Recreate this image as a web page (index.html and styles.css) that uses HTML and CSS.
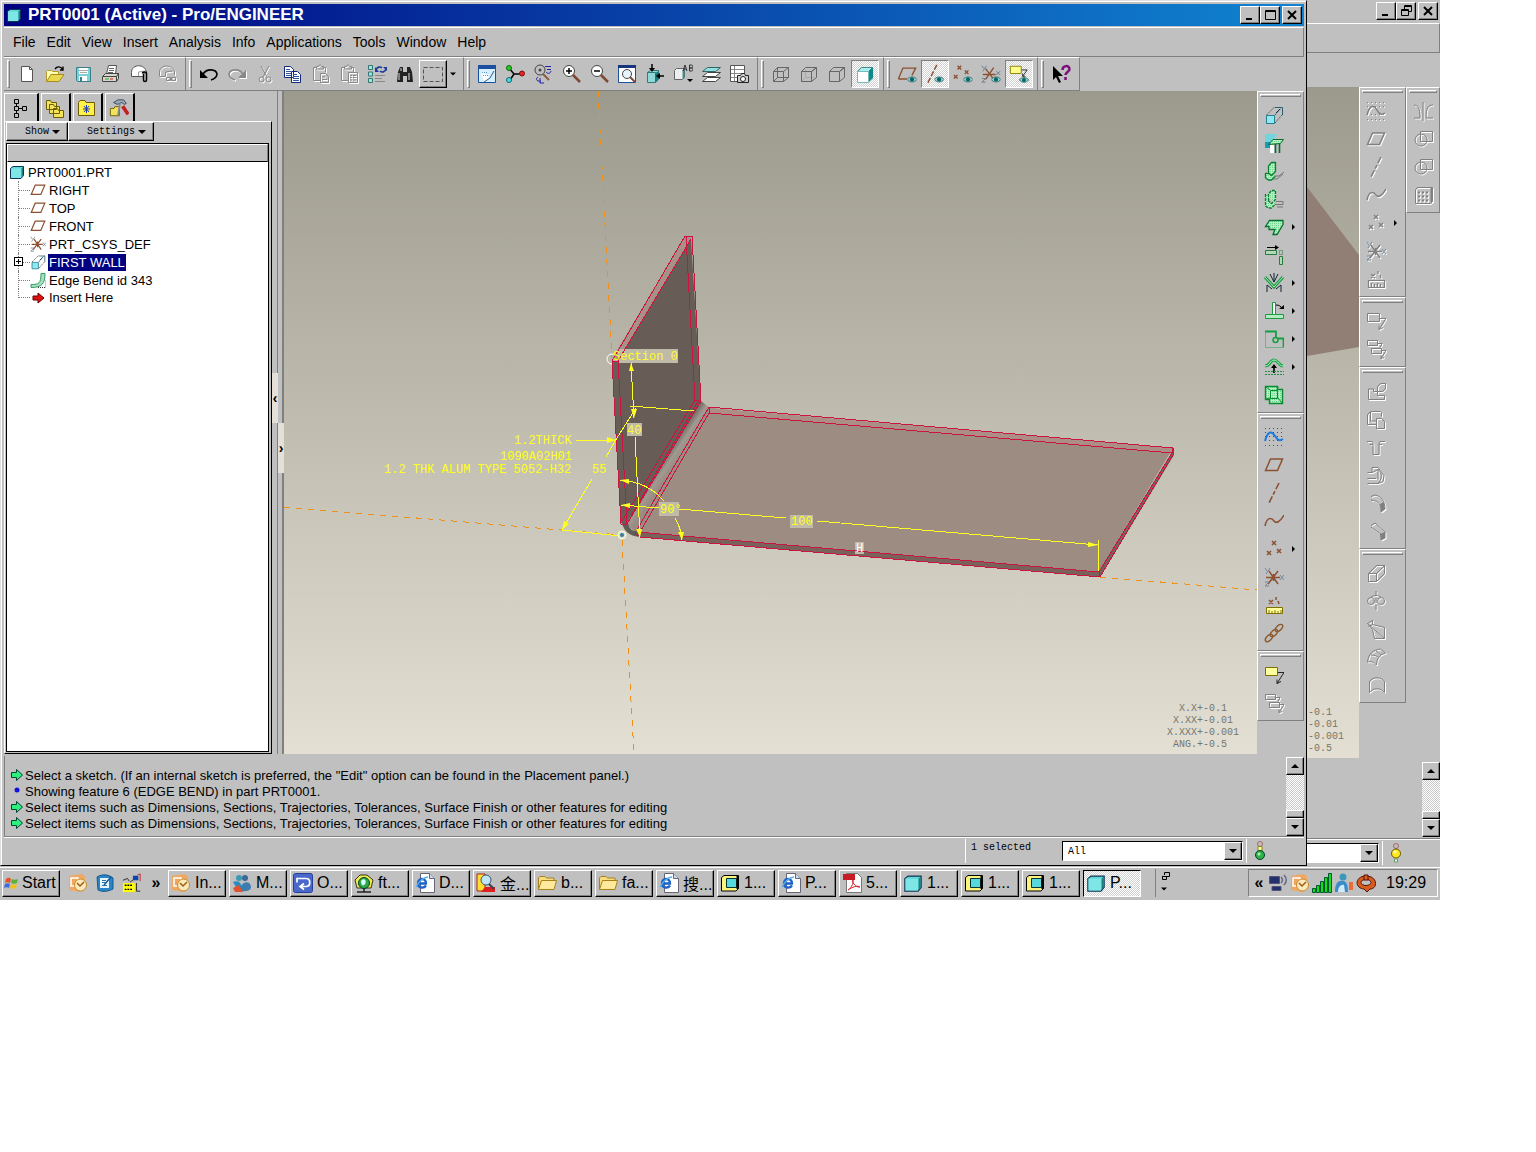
FILE: index.html
```html
<!DOCTYPE html>
<html lang="en">
<head>
  <meta charset="UTF-8">
  <title>PRT0001 (Active) - Pro/ENGINEER</title>
  <link rel="stylesheet" href="styles.css">
</head>
<body>

<!-- icon sprite -->
<svg class="sprite" aria-hidden="true">
  <defs>
    <pattern id="dots" width="2" height="2" patternUnits="userSpaceOnUse"><rect width="2" height="2" fill="#b4f0c4"/><rect width="1" height="1" fill="#6cd48c"/></pattern>
    <linearGradient id="sky" x1="0" y1="0" x2="0" y2="1"><stop offset="0" stop-color="#9c9a8c"/><stop offset="1" stop-color="#e3e0d3"/></linearGradient>
    <linearGradient id="bend" gradientUnits="userSpaceOnUse" x1="661" y1="461" x2="673" y2="469"><stop offset="0" stop-color="#6d635d"/><stop offset=".5" stop-color="#a09a92"/><stop offset="1" stop-color="#988a80"/></linearGradient>
  </defs>

  <symbol id="part" viewBox="0 0 16 16"><path d="M1.500 4.500 4 2.500h10.500v9L12 14.500H1.500z" fill="#5cd6d6" stroke="#135"/><path d="M2 4.500h10v9.500H2z" fill="#7fe6e6"/><path d="M12.500 4.500 14 3v8.500L12.500 13z" fill="#1c8080"/></symbol>
  <symbol id="min" viewBox="0 0 16 14"><path d="M4 11h6" stroke="#000" stroke-width="2"/></symbol>
  <symbol id="max" viewBox="0 0 16 14"><path d="M3.500 2.500h10v9h-10zM3 3.500h11" fill="none" stroke="#000"/></symbol>
  <symbol id="restore" viewBox="0 0 16 14"><path d="M6.500 5V1.500h7v6H11M6 2.500h8M3.500 5.500h7v6h-7zM3 6.500h8" fill="none" stroke="#000"/></symbol>
  <symbol id="close" viewBox="0 0 16 14"><path d="m4 3 8 8m0-8-8 8" stroke="#000" stroke-width="2"/></symbol>
  <symbol id="down" viewBox="0 0 8 8"><path d="M0 2h8L4 6z"/></symbol>
  <symbol id="up" viewBox="0 0 8 8"><path d="M0 6h8L4 2z"/></symbol>
  <symbol id="right" viewBox="0 0 8 8"><path d="M2 1v6l3-3z"/></symbol>

  <symbol id="new" viewBox="0 0 20 20"><path d="M4.500 2.500h8l3 3v12h-11z" fill="#fff" stroke="#555"/><path d="M12.500 2.500v3h3" fill="none" stroke="#555"/></symbol>
  <symbol id="open" viewBox="0 0 20 20"><path d="M1.500 17V7.500l1-1h4l1 1h6v3" fill="#ffffb0" stroke="#b8982c"/><path d="M1.500 17.500 6 10.500h13L14 17.500z" fill="#ead84c" stroke="#a88c20"/><path d="M10 5c2-3 6-3 8 1M15 6h3V2.500" fill="none" stroke="#000" stroke-width="1.400"/></symbol>
  <symbol id="save" viewBox="0 0 20 20"><path d="M3.500 3.500h14v14h-13l-1-1z" fill="#79d3d6" stroke="#3b7f88"/><path d="M6 4h9v6H6zM6 12h8v5H6z" fill="#fff"/><path d="M6 6.500h9M7 8.500h7" stroke="#aaa"/><path d="M7 13h2v4H7z" fill="#3b7f88"/></symbol>
  <symbol id="print" viewBox="0 0 20 20"><path d="m5.500 10 2-8.500h8l-1 9z" fill="#fff" stroke="#555"/><path d="M8 4.500h5M8 6.500h5M7 8.500h5" stroke="#666"/><path d="m1.500 12.500 3-3h13v5l-2 3h-14z" fill="#d8d4cc" stroke="#444"/><path d="M2 12.500h13.500v5M15.500 12.500l2-3" fill="none" stroke="#444"/><path d="M4 15h4" stroke="#2a2"/><path d="M9 15h3" stroke="#c22"/></symbol>
  <symbol id="mail" viewBox="0 0 20 20"><path d="M2.500 8.500c0-9 14-9 15 0l-3 1v3h-12z" fill="#fff" stroke="#555"/><path d="M9.500 12V8l7-1" fill="none" stroke="#999"/><path d="M14.500 10v6c0 2 3 2 3 0V9.500c0-2-4-2-4 0" fill="none" stroke="#000" stroke-width="1.500"/></symbol>
  <symbol id="maillink" viewBox="0 0 20 20"><path d="M2.500 12V8c0-8 14-8 15 0v3M2.500 12.500h6M8.500 12V8l7-1M9.500 13.500h4v3h-4zM14.500 13.500h4v3h-4zM12 15h4" fill="none" stroke="#888"/></symbol>
  <symbol id="undo" viewBox="0 0 20 20"><path d="M4 10c4-6 13-5 14 0 0 3-3 5-6 6" fill="none" stroke="#000" stroke-width="1.600"/><path d="M1 6v8h8z"/></symbol>
  <symbol id="redo" viewBox="0 0 20 20"><path d="M16 10C12 4 3 5 2 10c0 3 3 5 6 6" fill="none" stroke="#888" stroke-width="1.600"/><path d="M19 6v8h-8z" fill="#888"/></symbol>
  <symbol id="cut" viewBox="0 0 20 20"><path d="m6 2 6 11M14 2 8 13" stroke="#888" fill="none"/><circle cx="6.500" cy="15.500" r="2.500" fill="none" stroke="#888"/><circle cx="13.500" cy="15.500" r="2.500" fill="none" stroke="#888"/></symbol>
  <symbol id="copy" viewBox="0 0 20 20"><path d="M1.500 2.500h6l3 3v8h-9zM8.500 7.500h6l3 3v8h-9z" fill="#fff" stroke="#112a7a"/><path d="M3 5.500h4M3 7.500h5M3 9.500h5M3 11.500h5M10 10.500h4M10 12.500h6M10 14.500h6M10 16.500h6" stroke="#3355a0"/></symbol>
  <symbol id="paste" viewBox="0 0 20 20"><path d="M9 16.500H2.500v-13h3m6 0h3V8M5.500 5V2.500h2c0-2 3-2 3 0h2V5zM9.500 9.500h5l3 3v6h-8zM11 13h3M11 15.500h5" fill="none" stroke="#888"/></symbol>
  <symbol id="pastespecial" viewBox="0 0 20 20"><path d="M9 16.500H2.500v-13h3m6 0h3V8M5.500 5V2.500h2c0-2 3-2 3 0h2V5zM9.500 8.500h9v10h-9zM11 11.500h2M14 11.500h3M11 13.500h2M14 13.500h3M11 16h2M14 16h3" fill="none" stroke="#888"/></symbol>
  <symbol id="regen" viewBox="0 0 20 20"><path d="M1.500 1.500h4v4h-4zM1.500 8h4v4h-4zM1.500 14.500h4v4h-4z" fill="#9ee6d4" stroke="#377"/><path d="M9 6c1-3 4-4 6-2M19 5c-1 3-4 4-6 2" fill="none" stroke="#1a3a9a" stroke-width="1.600"/><path d="M8 3v5h4zM20 7V3h-4z" fill="#1a3a9a"/><path d="M8 11.500h10M8 14.500h7M8 17.500h10" stroke="#888"/></symbol>
  <symbol id="find" viewBox="0 0 20 20"><path d="M3 8 5 3h3v15H2zM17 8l-2-5h-3v15h6zM8 8h4v4H8z" fill="#222"/><path d="M4 9v7M14 9v7M6 4v3" stroke="#ddd"/></symbol>
  <symbol id="box" viewBox="0 0 20 20"><path d="M.5 3.500h19v14H.5z" fill="none" stroke="#555" stroke-dasharray="4 2"/></symbol>

  <symbol id="repaint" viewBox="0 0 20 20"><path d="M1.500 1.500h17v17h-17z" fill="#d7eefc" stroke="#1c4fa0"/><path d="M1 1h18v4H1z" fill="#1c4fa0"/><path d="m4 7 9 7-6 4z" fill="#fff"/><path d="m17 7-4 7-6 4" fill="none" stroke="#2b5f95"/><path d="M5 8.500h5M6 11.500h5" stroke="#5a9ad0" stroke-dasharray="1 1"/></symbol>
  <symbol id="spin" viewBox="0 0 20 20"><path d="m4 4 5 6-4 6M9 10h7" fill="none" stroke="#000" stroke-width="1.500"/><circle cx="4" cy="4" r="2.500" fill="#2c2" stroke="#161"/><circle cx="4" cy="16" r="2.500" fill="#4de" stroke="#166"/><circle cx="17" cy="9.500" r="2.500" fill="#e22" stroke="#711"/></symbol>
  <symbol id="orient" viewBox="0 0 20 20"><circle cx="7" cy="6" r="5" fill="none" stroke="#444"/><circle cx="7" cy="6" r="1.500" fill="#444"/><path d="m10 10 6 6" stroke="#8a5a3c" stroke-width="2"/><path d="M12 2.500h6M14 5.500h4M13 8c2 2 4 2 5-1M5 13c-3 2-1 5 3 4M7 14v5h4" fill="none" stroke="#22a"/></symbol>
  <symbol id="zoomin" viewBox="0 0 20 20"><path d="m11 10 8 8" stroke="#7c4a30" stroke-width="2.500"/><circle cx="8" cy="7" r="5.500" fill="#fff" stroke="#444"/><path d="M5 7h6M8 4v6" stroke="#000" stroke-width="1.500"/></symbol>
  <symbol id="zoomout" viewBox="0 0 20 20"><path d="m11 10 8 8" stroke="#7c4a30" stroke-width="2.500"/><circle cx="8" cy="7" r="5.500" fill="#fff" stroke="#444"/><path d="M5 7h6" stroke="#000" stroke-width="1.500"/></symbol>
  <symbol id="refit" viewBox="0 0 20 20"><path d="M1.500 1.500h17v17h-17z" fill="#fff" stroke="#1c4fa0"/><path d="M1 1h18v3H1z" fill="#16357e"/><path d="m12 12 6 6" stroke="#7c4a30" stroke-width="2"/><circle cx="10" cy="10" r="4.500" fill="#e8f4fc" stroke="#444"/></symbol>
  <symbol id="reorient" viewBox="0 0 20 20"><path d="m2.500 8.500 3-2h8v9l-3 3h-8z" fill="#8ed8d8" stroke="#377"/><path d="M2.500 8.500h8v10" fill="none" stroke="#377"/><path d="M10.500 9v9l3-3V7z" fill="#197878"/><path d="M7 0v6M19 12h-5" stroke="#000" stroke-width="1.500"/><path d="M4 4h6L7 8zM15 9v6l-4-3z"/></symbol>
  <symbol id="views" viewBox="0 0 20 20"><path d="m1.500 6.500 2-2h8v9l-2 2h-8z" fill="#eee" stroke="#666"/><path d="M9.500 6.500v9l2-2v-9z" fill="#3c9090"/><path d="m10 7 2-6 2 6M11 5h2M16.500 1v6h2c2 0 2-3 0-3h-2 2c1.500 0 1.500-3 0-3z" fill="none" stroke="#333"/><path d="M14 15h6l-3 3z"/></symbol>
  <symbol id="layers" viewBox="0 0 20 20"><path d="m1.500 17.500 5-4h13l-5 4zM1.500 12.500l5-4h13l-5 4z" fill="#fff" stroke="#444"/><path d="m1.500 7.500 5-4h13l-5 4z" fill="#8fe0e0" stroke="#366"/></symbol>
  <symbol id="viewmgr" viewBox="0 0 20 20"><path d="M1.500 1.500h14v16h-14z" fill="#fff" stroke="#555"/><path d="M2 5.500h13M2 9.500h13M2 13.500h13M5.500 2v15" stroke="#888"/><path d="M8.500 11.500h3l1-2h3l1 2h3v7h-11z" fill="#ccc" stroke="#222"/><circle cx="14" cy="15" r="2.500" fill="#fff" stroke="#222"/></symbol>

  <symbol id="wire" viewBox="0 0 20 20"><path d="M2.500 7.500h10v10h-10zM6.500 3.500h11v10h-11zM2.500 7.500l4-4M12.500 7.500l5-4M12.500 17.500l5-4M2.500 17.500l4-4" fill="none" stroke="#666"/></symbol>
  <symbol id="hidden" viewBox="0 0 20 20"><path d="M6.500 5v8.500H16M6 14l-3 3" fill="none" stroke="#aaa"/><path d="M2.500 7.500h10v10h-10zl4-4h11l-5 4 5-4v10l-5 4" fill="none" stroke="#666"/></symbol>
  <symbol id="nohidden" viewBox="0 0 20 20"><path d="M2.500 7.500h10v10h-10zl4-4h11l-5 4 5-4v10l-5 4" fill="none" stroke="#666"/></symbol>
  <symbol id="shaded" viewBox="0 0 20 20"><path d="m2.500 7.500 4-4h11l-4 4z" fill="#a8f0f0" stroke="#488"/><path d="M2.500 7.500h11v11h-11z" fill="#fff" stroke="#7bb"/><path d="m14 7 4-4v11l-4 4z" fill="#188"/></symbol>

  <symbol id="eye" viewBox="0 0 12 8"><path d="M0 4c3-4 9-4 12 0-3 4-9 4-12 0z" fill="#9cc" stroke="#366"/><circle cx="6" cy="4" r="2.500" fill="#066"/></symbol>
  <symbol id="plane" viewBox="0 0 20 20"><path d="M1.500 15.500 6.500 4h12l-5 11.500z" fill="none" stroke="currentColor" stroke-width="1.500"/></symbol>
  <symbol id="axis" viewBox="0 0 20 20"><path d="M15 0 5 20" fill="none" stroke="currentColor" stroke-width="1.600" stroke-dasharray="7 2 4 2"/></symbol>
  <symbol id="curve" viewBox="0 0 20 20"><path d="M1 15c2-10 7-8 9-5s6 1 10-6" fill="none" stroke="currentColor" stroke-width="1.500"/></symbol>
  <symbol id="points" viewBox="0 0 20 20"><path d="m8 2 4 4m0-4L8 6M3 12l4 4m0-4-4 4M13 10l4 4m0-4-4 4" fill="none" stroke="currentColor" stroke-width="1.500"/></symbol>
  <symbol id="csys" viewBox="0 0 20 20"><path d="M2 10.500h14M5 4l9 13M14 4 4 17M9.500 7v7" fill="none" stroke="currentColor" stroke-width="1.500"/><path d="m1 1 2 3m3-3L2 7M1 15h4l-4 4h4M16 8l4 5m0-5-4 5" fill="none" stroke="#789"/></symbol>
  <symbol id="planeeye" viewBox="0 0 22 20"><path d="M1.500 15.500 6.500 3.500h14l-4 8M1.500 15.500H11" fill="none" stroke="#8c5030" stroke-width="1.500"/><use href="#eye" x="11" y="12" width="11" height="8"/></symbol>
  <symbol id="axiseye" viewBox="0 0 22 20"><path d="M13 0 3 20" stroke="#8c5030" stroke-width="1.600" stroke-dasharray="6 2"/><use href="#eye" x="10" y="12" width="11" height="8"/></symbol>
  <symbol id="pointseye" viewBox="0 0 22 20"><path d="m5 1 4 4m0-4L5 5M1 11l4 4m0-4-4 4M13 6l4 4m0-4-4 4" stroke="#8c5030" stroke-width="1.500"/><use href="#eye" x="11" y="12" width="11" height="8"/></symbol>
  <symbol id="csyseye" viewBox="0 0 22 20"><path d="M2 10.500h14M5 4l9 12M14 3 5 16" stroke="#8c5030" stroke-width="1.500"/><path d="m1 1 2 3m3-3L2 7M1 15h4l-4 4h4M17 7l4 4m0-4-4 4" fill="none" stroke="#678"/><use href="#eye" x="11" y="12" width="11" height="8"/></symbol>
  <symbol id="noteeye" viewBox="0 0 22 20"><path d="M1.500 1.500h12v8h-12z" fill="#ffff8c" stroke="#887a00"/><path d="M14 5.500h6l-5 7v-3m0 3h3" fill="none" stroke="#222"/><use href="#eye" x="11" y="13" width="11" height="7"/></symbol>
  <symbol id="help" viewBox="0 0 20 20"><path d="M2 2v14l3-3 3 6 2-1-3-6h5z"/><path d="M11.500 6c0-5 7-5 7-1 0 3-4 3-4 6M14.500 13v3" fill="none" stroke="#7a107a" stroke-width="2.500"/></symbol>

  <symbol id="tree" viewBox="0 0 16 20"><path d="M1.500 1.500h4v4h-4zM1.500 8.500h4v4h-4zM1.500 15.500h4v4h-4zM9.500 8.500h4v4h-4zM3.500 5.500v3M3.500 12.500v3M5.500 10.500h4" fill="none" stroke="#000"/></symbol>
  <symbol id="folders" viewBox="0 0 20 20"><path d="M1.500 2.500h4l1 2h5v7h-10zM4.500 6.500h4l1 2h5v7h-10zM8.500 10.500h4l1 2h5v7h-10z" fill="#f2e25c" stroke="#6d5c00"/></symbol>
  <symbol id="fav" viewBox="0 0 20 20"><path d="M1.500 4.500 3 2.500h5l1 2h8.500v13h-16z" fill="#fff04c" stroke="#6d5c00"/><path d="M9.500 7v8M6 11h7M7 8l5 6m0-6-5 6" stroke="#1c3cb0"/></symbol>
  <symbol id="conn" viewBox="0 0 22 20"><path d="M1.500 10.500h4l1-2h5v10h-10z" fill="#f2e25c" stroke="#6d5c00"/><path d="m5 4 5-3h6l3 4-2 1-3-2-5 2z" fill="#9ab" stroke="#345"/><path d="m12 5-2 13" stroke="#888" stroke-width="2"/><path d="m15 8 6 9" stroke="#c22020" stroke-width="4"/></symbol>

  <symbol id="wall" viewBox="0 0 20 20"><path d="M2.500 10.500h8v8h-8z" fill="#8eeaf0" stroke="#2a7c90"/><path d="m2.500 10 8-8M11 10l7-8M11 18l7-8" fill="none" stroke="#555" stroke-dasharray="2 1"/><path d="M11 2.500h7.500V10" fill="none" stroke="#2a6070"/><path d="m12 8 4-4" fill="none" stroke="#135"/></symbol>
  <symbol id="conv" viewBox="0 0 20 20"><path d="M1 1h12L8 9H1z" fill="#6fd6dc"/><path d="M1 9h6v6H1z" fill="#1a9ab0"/><path d="M4.500 11.500 9 6.500h10.500l-3 4z" fill="url(#dots)" stroke="#0a6a30"/><path d="M6 12h4v8H6z" fill="#fff"/><path d="M11.500 11v9M15.500 11v9" stroke="#0a6a30" stroke-width="1.600"/></symbol>
  <symbol id="flange" viewBox="0 0 20 20"><path d="M4.500 12V5l3-3.500h4v9l-4 4zM1.500 12v5l3 2h3l4-4M1.500 12l3 1" fill="url(#dots)" stroke="#0a8030" stroke-width="1.300"/><path d="M11 15h4l5-4M9 18h4l6-5" fill="none" stroke="#777"/></symbol>
  <symbol id="flange2" viewBox="0 0 20 20"><path d="M4.500 12V5l3-3.500h4v9l-4 4zM1.500 5v12l3 2h3l4-4" fill="url(#dots)" stroke="#0a8030" stroke-width="1.300" stroke-dasharray="3 1"/><path d="M11 15.500h8v-3h-7M13 18h6" fill="none" stroke="#777"/></symbol>
  <symbol id="flat" viewBox="0 0 20 20"><path d="m1.500 9.500 4-6h13.500v4l-6 10h-4l2-5h-6v-3z" fill="url(#dots)" stroke="#0a7030" stroke-width="1.300"/></symbol>
  <symbol id="extend" viewBox="0 0 20 20"><path d="M3 2.500h10" stroke="#000"/><path d="M11 0v5l4-2.500z"/><path d="M1.500 5.500h11v4h-11z" fill="#b4d8bc" stroke="#287a3c"/><path d="M15.500 5.500h3v4h-3z" fill="none" stroke="#287a3c" stroke-dasharray="1 1"/><path d="M15.500 11.500h3v8h-3z" fill="#b4d8bc" stroke="#287a3c"/></symbol>
  <symbol id="unbend" viewBox="0 0 20 20"><path d="m1 4 9 10 9-10" fill="none" stroke="#1b9a40" stroke-width="3"/><path d="m1 4 9 10 9-10" fill="none" stroke="#a6eab8"/><path d="M10 0v9M6 1l4 8 4-8M3 19v-7l5 4M17 19v-7l-5 4" fill="none" stroke="#123"/></symbol>
  <symbol id="bendback" viewBox="0 0 20 20"><path d="M1.500 13.500h18v4h-18z" fill="#b0ecc0" stroke="#1b9a40"/><path d="M8.500 1.500h3v12h-3z" fill="#fff" stroke="#1b9a40"/><path d="M12 4c3 0 5 1 6 4" fill="none" stroke="#000"/><path d="M15 8h5v-4z"/></symbol>
  <symbol id="rip" viewBox="0 0 20 20"><path d="M1.500 2.500v16h18" fill="none" stroke="#2fa050" stroke-dasharray="1 1"/><path d="M1 2.500h11v6M14 9.500h5.500v9" fill="none" stroke="#13a040" stroke-width="1.800"/><circle cx="11.500" cy="11" r="2.500" fill="none" stroke="#13a040" stroke-width="1.500"/></symbol>
  <symbol id="form" viewBox="0 0 20 20"><path d="M1 9c5 0 5-6 9-6s5 6 9 6" fill="none" stroke="#13a040" stroke-width="3"/><path d="M1 9c5 0 5-6 9-6s5 6 9 6" fill="none" stroke="#c4f4d0"/><path d="M10 16V8" stroke="#000" stroke-width="1.600"/><path d="M7 11h6l-3-4z"/><path d="M1 14.500h19M1 17.500h19" stroke="#2a8a4c" stroke-dasharray="2 1"/></symbol>
  <symbol id="flatpat" viewBox="0 0 20 20"><path d="M1.500 1.500h12v3h5v14h-13v-4h-4z" fill="url(#dots)" stroke="#0a8a30" stroke-width="1.400"/><path d="M6.500 5.500h7v8h-7zM2 2l4 3M13 5l1-3M6 13l-4 1M14 13l4 5" fill="none" stroke="#0a8a30"/></symbol>
  <symbol id="sketch" viewBox="0 0 20 20"><path d="M1 1.500h19M1 5.500h19M1 9.500h19M1 13.500h19M1 18.500h19" stroke="#357" stroke-dasharray="1 3"/><path d="M1 14C4 3 8 4 11 9s5 5 8 3" fill="none" stroke="#1b7ae0" stroke-width="2"/></symbol>
  <symbol id="gsketch" viewBox="0 0 20 20"><path d="M1 1.500h19M1 5.500h19M1 13.500h19M1 18.500h19" stroke="#808080" stroke-dasharray="1 3"/><path d="M1 14C4 3 8 4 11 9s5 5 8 3" fill="none" stroke="#808080" stroke-width="1.500"/></symbol>
  <symbol id="measure" viewBox="0 0 20 20"><path d="m5 5 4 4m0-4-4 4M12 2v3M14 6l1 3" stroke="currentColor" stroke-width="1.500"/><path d="M2.500 12.500h16v6h-16z" fill="#ffff9c" stroke="#807000"/><path d="M5 19v-4M8 19v-3M11 19v-4M14 19v-3M17 19v-4" stroke="#807000"/></symbol>
  <symbol id="gmeasure" viewBox="0 0 20 20"><path d="m5 5 4 4m0-4-4 4M12 2v3M14 6l1 3M2.500 11.500h16v7h-16zM5.500 18v-4M8.500 18v-3M11.500 18v-4M14.500 18v-3" fill="none" stroke="#808080" stroke-width="1.200"/></symbol>
  <symbol id="chain" viewBox="0 0 20 20"><g fill="none" stroke="#8c5a2c" stroke-width="1.400"><ellipse cx="5" cy="15" rx="2.500" ry="4.500" transform="rotate(45 5 15)"/><ellipse cx="10" cy="10" rx="2.500" ry="4.500" transform="rotate(45 10 10)"/><ellipse cx="15" cy="5" rx="2.500" ry="4.500" transform="rotate(45 15 5)"/></g></symbol>
  <symbol id="note" viewBox="0 0 20 20"><path d="M1.500 2.500h12v8h-12z" fill="#ffff9c" stroke="#807000"/><path d="M14 7.500h6l-7 11v-4m0 4 4-2" fill="none" stroke="#222"/></symbol>
  <symbol id="gnote" viewBox="0 0 20 20"><path d="M1.500 2.500h12v8h-12zM14 7.500h6l-7 11v-4m0 4 4-2" fill="none" stroke="#808080"/></symbol>
  <symbol id="gnotes" viewBox="0 0 20 20"><path d="M1.500 1.500h10v5h-10zM12 4.500h4l-2 4M5.500 9.500h10v5h-10zM16 11.500h4l-5 8v-3m0 3 3-1" fill="none" stroke="#808080"/></symbol>

  <symbol id="g1" viewBox="0 0 20 20"><path d="M2.500 8v10.500h16v-4h-7v-4h-4V8zM11.500 5.500l3-3h5v5l-3 3h-5z" fill="none" stroke="#808080"/></symbol>
  <symbol id="g2" viewBox="0 0 20 20"><path d="M1.500 5.500l3-3h10l1 1v4M1.500 5.500v10h9M4.500 3v9h6M10.500 9.500h5l3 3v7h-8z" fill="none" stroke="#808080"/></symbol>
  <symbol id="g3" viewBox="0 0 20 20"><path d="M1 4.500h4c2 0 2 1 2 3v10h6v-10c0-2 0-3 2-3h4M4 7.500h3M13 7.500h3" fill="none" stroke="#808080"/></symbol>
  <symbol id="g4" viewBox="0 0 20 20"><path d="M6 2.500h6l6 8-1 6-5 2H1.500M6 2.500v5H1.500M6 7.500l6-3v10M1.500 13.500H10M12 4.500c5 3 4 10 0 14" fill="none" stroke="#808080"/></symbol>
  <symbol id="g5" viewBox="0 0 20 20"><path d="M5 3.500 9 2c6 1 10 6 10 14l-4 3c1-7-2-11-10-12" fill="none" stroke="#808080"/><path d="M14 11l4-2 1 7-4 3z" fill="#808080"/></symbol>
  <symbol id="g6" viewBox="0 0 20 20"><path d="M5 4.500 9 2l10 9v6l-4 2v-6L5 6" fill="none" stroke="#808080"/><path d="m14 13 5-2v6l-4 2z" fill="#808080"/></symbol>
  <symbol id="g7" viewBox="0 0 20 20"><path d="M2.500 10.500h8v8h-8zl8-8h8l-8 8 8-8v8l-8 8" fill="none" stroke="#808080"/></symbol>
  <symbol id="g8" viewBox="0 0 20 20"><circle cx="5" cy="10" r="3.500" fill="none" stroke="#808080"/><circle cx="15" cy="10" r="3.500" fill="none" stroke="#808080"/><path d="M10 0v20" stroke="#808080" stroke-dasharray="5 2"/><path d="M5 6c3-2 7-2 10 0" fill="none" stroke="#808080"/></symbol>
  <symbol id="g9" viewBox="0 0 20 20"><path d="M1.500 4.500l5-3v4l12 3v11h-10l-2-9zl17 15M6.500 5.500l-4 2" fill="none" stroke="#808080"/></symbol>
  <symbol id="g10" viewBox="0 0 20 20"><path d="M1.500 15c1-8 5-12 13-13l5 4c-5 1-9 5-9 12-2-3-6-4-9-3zM5 8c4 0 6 1 8 3M10 4l5 4" fill="none" stroke="#808080"/></symbol>
  <symbol id="g11" viewBox="0 0 20 20"><path d="M3.500 17.500v-11c3-5 12-5 15 0v11c-3-5-12-5-15 0z" fill="none" stroke="#808080"/></symbol>
  <symbol id="mirror" viewBox="0 0 20 20"><path d="M10 1v19M1 4c4 0 6 3 6 13H1M20 4c-5 0-7 3-7 13h7" fill="none" stroke="#808080"/></symbol>
  <symbol id="merge" viewBox="0 0 20 20"><path d="M7.500 2.500h12v10h-12z" fill="none" stroke="#808080"/><circle cx="8" cy="11" r="6" fill="none" stroke="#808080"/></symbol>
  <symbol id="grid" viewBox="0 0 20 20"><path d="m2.500 4.500 2-2h15v14l-2 2h-15z" fill="none" stroke="#808080"/><path d="M5 7.500h11M5 11.500h11M5 15.500h11" stroke="#808080" stroke-width="2" stroke-dasharray="2 2"/><path d="M18.500 3v14" stroke="#808080" stroke-width="2"/></symbol>

  <symbol id="edge" viewBox="0 0 16 16"><path d="M1 12.500c8 0 10-1 10-11h4c0 10-3 14-14 14z" fill="#a8e0c0" stroke="#396"/><path d="M8 15.500h8v-8" fill="none" stroke="#333" stroke-dasharray="1 1"/></symbol>
  <symbol id="here" viewBox="0 0 16 16"><path d="M3 6h5V3l6 5-6 5v-3H3z" fill="#e01010" stroke="#600"/></symbol>
  <symbol id="prompt" viewBox="0 0 12 12"><path d="M.5 3.500h5v-3l6 5.500-6 5.500v-3h-5z" fill="#2cf07c" stroke="#043"/></symbol>
  <symbol id="info" viewBox="0 0 12 12"><circle cx="6" cy="5" r="2.500" fill="#11d"/></symbol>
  <symbol id="light" viewBox="0 0 12 20"><circle cx="6" cy="3" r="2.500" fill="none" stroke="#a66"/><path d="M4 5.500h4V10H4z" fill="#ff9" stroke="#882"/><circle cx="6" cy="14" r="4.500" fill="#2eb04a" stroke="#042"/><circle cx="5" cy="13" r="1.500" fill="#aef0b8"/></symbol>
  <symbol id="lighty" viewBox="0 0 12 20"><circle cx="6" cy="3" r="2.500" fill="none" stroke="#a66"/><circle cx="6" cy="10.500" r="4.500" fill="#ffe81c" stroke="#650"/><circle cx="5" cy="9" r="1.500" fill="#fffbc0"/><path d="M4.500 16h3v3h-3z" fill="#efe" stroke="#696"/></symbol>

  <symbol id="winlogo" viewBox="0 0 16 16"><path d="M2 4c2-2 4-1 5 0L6 8C4 7 3 7 1 8z" fill="#e8502c"/><path d="M8 4c2 1 4 1 6 0l-1 4c-2 1-4 1-6 0z" fill="#5cb03c"/><path d="M1 9c2-1 3-1 5 0l-1 4c-1-1-3-1-5 0z" fill="#3a6ce0"/><path d="M7 9c2 1 4 1 6 0l-1 4c-2 1-4 1-6 0z" fill="#f2c21c"/></symbol>
  <symbol id="outlook" viewBox="0 0 20 20"><path d="M1 3 14 1l3 3v12l-4 3L1 17z" fill="#f0a860"/><path d="M3 5h7v8H3z" fill="none" stroke="#fff" stroke-width="1.500"/><circle cx="12.500" cy="12" r="6" fill="#fbe9ba" stroke="#c88a30"/><path d="m9 10 3 3 4-4" fill="none" stroke="#9c5c18" stroke-width="1.500"/></symbol>
  <symbol id="desktop" viewBox="0 0 20 20"><path d="M2 4c5-3 11-3 16 1v11c-6 3-11 3-15 1z" fill="#2a84c8" stroke="#135a94"/><path d="M5 5h9v10H5z" fill="#e7f5ff"/><path d="M7 7.500h4M7 9.500h3M7 12.500h5" stroke="#2a74b0"/><path d="m9 12 7-8" stroke="#17558c" stroke-width="1.500"/></symbol>
  <symbol id="zap" viewBox="0 0 22 20"><path d="M1 10h13v10H1z" fill="#ff0"/><path d="M3 12.500h9M3 17h9" stroke="#000" stroke-width="1.500" stroke-dasharray="2 1"/><path d="m1 7 5-2 2 3M9 9l4-3M16 10v9h4" fill="none" stroke="#222"/><path d="M12 2h6v5h-6z" fill="#14a"/><path d="m17 1 3-1v8" fill="none" stroke="#c22"/></symbol>
  <symbol id="msn" viewBox="0 0 20 20"><circle cx="7" cy="5" r="3" fill="#3b9ab0"/><path d="M1 9c4-2 9-1 9 8L4 14z" fill="#2a8cc0"/><circle cx="13" cy="5" r="3" fill="#356a98"/><path d="M8 18c0-9 10-12 11-4 0 4-6 5-11 4z" fill="#3c7cb0"/><path d="m1 15 6-3 4 7H3z" fill="#e0522c"/></symbol>
  <symbol id="oapp" viewBox="0 0 20 20"><rect x=".5" y=".5" width="19" height="19" rx="2" fill="#4a68cc" stroke="#25409c"/><path d="M4 9.500V5.500h9c5 0 5 8 0 8H8m3-3-4 3 4 3" fill="none" stroke="#fff" stroke-width="1.700"/></symbol>
  <symbol id="globe" viewBox="0 0 20 20"><path d="m1 7 5-5h7l6 5-2 8H3z" fill="#f4ec4c" stroke="#332"/><circle cx="10" cy="10" r="5.500" fill="#2aa84c" stroke="#042"/><path d="M7 8c3-4 6 0 4 3s-4 1-4-3" fill="#dff"/><path d="M10 15v4M3 19h14" stroke="#222" stroke-width="1.500"/></symbol>
  <symbol id="ie" viewBox="0 0 20 20"><path d="M5.500.500h9l5 5v14h-14z" fill="#fff" stroke="#667"/><path d="M14.500.500v5h5" fill="#cde" stroke="#667"/><path d="M3 10.500h8c0-6-8-6-8 0 0 5 6 5 8 2" fill="none" stroke="#1c62c8" stroke-width="2.300"/><path d="M1 14C4 8 9 4 13 4" fill="none" stroke="#5ab0ec" stroke-width="1.300"/></symbol>
  <symbol id="dict" viewBox="0 0 20 20"><path d="M1 1h8v17H1z" fill="#ffe030" stroke="#a22"/><path d="M9 14h10v5H5z" fill="#dd2020"/><circle cx="10" cy="7" r="5" fill="#bfe6fa" stroke="#456"/><path d="m13 11 5 5" stroke="#345" stroke-width="2"/></symbol>
  <symbol id="folder" viewBox="0 0 20 20"><path d="M1.500 16V5l1.500-1.500h5L9.500 5H17v3" fill="#f7dc80" stroke="#a8801c"/><path d="M1.500 16.500 4.500 7.500h15l-2.500 9z" fill="#ffe99c" stroke="#a8801c"/></symbol>
  <symbol id="asm" viewBox="0 0 20 20"><path d="M1.500 4.500 4 2.500h14.500v13L16 18H1.500z" fill="#fdf27c" stroke="#000"/><path d="M6.500 5.500h10v9h-10z" fill="#56d8dc" stroke="#033"/><path d="M17.500 3v13" stroke="#000" stroke-width="2"/></symbol>
  <symbol id="pdf" viewBox="0 0 20 20"><path d="M4.500.500h11l4 4v15h-15z" fill="#fff" stroke="#777"/><path d="M1 1h12v6H1z" fill="#c81c24"/><path d="M6 17c4-2 6-9 5-10-2 0 2 8 7 7-2-2-8 0-12 3z" fill="none" stroke="#d8242c"/></symbol>
  <symbol id="cascade" viewBox="0 0 10 10"><path d="M3.500 3V.500h5v4H6M1.500 4.500h4v3h-4zM1 4.500h5" fill="none" stroke="#000"/></symbol>
  <symbol id="net" viewBox="0 0 20 20"><path d="M1.500 3.500h10v7h-10zM4 13.500h9v4H4z" fill="#23306c" stroke="#557"/><path d="M13 4c2 2 2 4 0 6M16 2c3 3 3 7 0 10" fill="none" stroke="#668" stroke-width="1.500"/></symbol>
  <symbol id="signal" viewBox="0 0 20 20"><path d="M.5 15.500h3v4h-3zM4.500 12.500h3v7h-3zM8.500 8.500h3v11h-3zM12.500 4.500h3v15h-3zM16.500.500h3v19h-3z" fill="#16e016" stroke="#053"/></symbol>
  <symbol id="user" viewBox="0 0 20 20"><circle cx="9" cy="4" r="3.500" fill="#3c98b8"/><path d="M1 19c0-9 3-12 8-11 4 0 5 5 5 11z" fill="#3c8cc8"/><path d="M4 19c0-5 3-8 6-7l1 7z" fill="#cfeafa"/><path d="M15 9h4v8h-4z" fill="#e86c3c"/></symbol>
  <symbol id="orange" viewBox="0 0 20 20"><path d="M10 3c12 0 12 13 4 13l-3 3-3-3C-2 15-1 3 10 3z" fill="#d85c1c" stroke="#511"/><ellipse cx="10" cy="9.500" rx="5" ry="3" fill="#c0c0c0" stroke="#511"/><path d="M8 2h4v5H8z" fill="#d85c1c" stroke="#511"/></symbol>
</svg>

<div class="screen">
  <div class="windows">

    <main class="window front">
      <header class="titlebar">
        <svg class="title-icon"><use href="#part"/></svg>
        <h1>PRT0001 (Active) - Pro/ENGINEER</h1>
        <div class="controls">
          <button aria-label="Minimize"><svg><use href="#min"/></svg></button>
          <button aria-label="Maximize"><svg><use href="#max"/></svg></button>
          <button class="close" aria-label="Close"><svg><use href="#close"/></svg></button>
        </div>
      </header>

      <nav class="menubar">
        <button>File</button><button>Edit</button><button>View</button><button>Insert</button><button>Analysis</button><button>Info</button><button>Applications</button><button>Tools</button><button>Window</button><button>Help</button>
      </nav>

      <div class="toolbar">
        <div class="group">
          <button class="tool" aria-label="New"><svg><use href="#new"/></svg></button>
          <button class="tool" aria-label="Open"><svg><use href="#open"/></svg></button>
          <button class="tool" aria-label="Save"><svg><use href="#save"/></svg></button>
          <button class="tool" aria-label="Print"><svg><use href="#print"/></svg></button>
          <button class="tool" aria-label="Mail"><svg><use href="#mail"/></svg></button>
          <button class="tool off" aria-label="Mail link"><svg><use href="#maillink"/></svg></button>
        </div>
        <div class="group">
          <button class="tool" aria-label="Undo"><svg><use href="#undo"/></svg></button>
          <button class="tool off" aria-label="Redo"><svg><use href="#redo"/></svg></button>
          <button class="tool off" aria-label="Cut"><svg><use href="#cut"/></svg></button>
          <button class="tool" aria-label="Copy"><svg><use href="#copy"/></svg></button>
          <button class="tool off" aria-label="Paste"><svg><use href="#paste"/></svg></button>
          <button class="tool off" aria-label="Paste special"><svg><use href="#pastespecial"/></svg></button>
          <button class="tool" aria-label="Regenerate"><svg><use href="#regen"/></svg></button>
          <button class="tool" aria-label="Find"><svg><use href="#find"/></svg></button>
          <button class="tool raised" aria-label="Select box"><svg><use href="#box"/></svg></button>
          <button class="drop" aria-label="Selection options"><svg><use href="#down"/></svg></button>
        </div>
        <div class="group">
          <button class="tool" aria-label="Repaint"><svg><use href="#repaint"/></svg></button>
          <button class="tool" aria-label="Spin center"><svg><use href="#spin"/></svg></button>
          <button class="tool" aria-label="Orient mode"><svg><use href="#orient"/></svg></button>
          <button class="tool" aria-label="Zoom in"><svg><use href="#zoomin"/></svg></button>
          <button class="tool" aria-label="Zoom out"><svg><use href="#zoomout"/></svg></button>
          <button class="tool" aria-label="Refit"><svg><use href="#refit"/></svg></button>
          <button class="tool" aria-label="Reorient"><svg><use href="#reorient"/></svg></button>
          <button class="tool" aria-label="Saved views"><svg><use href="#views"/></svg></button>
          <button class="tool" aria-label="Layers"><svg><use href="#layers"/></svg></button>
          <button class="tool" aria-label="View manager"><svg><use href="#viewmgr"/></svg></button>
        </div>
        <div class="group">
          <button class="tool" aria-label="Wireframe"><svg><use href="#wire"/></svg></button>
          <button class="tool" aria-label="Hidden line"><svg><use href="#hidden"/></svg></button>
          <button class="tool" aria-label="No hidden"><svg><use href="#nohidden"/></svg></button>
          <button class="tool pressed" aria-label="Shading"><svg><use href="#shaded"/></svg></button>
        </div>
        <div class="group">
          <button class="tool" aria-label="Datum planes"><svg><use href="#planeeye"/></svg></button>
          <button class="tool pressed" aria-label="Datum axes"><svg><use href="#axiseye"/></svg></button>
          <button class="tool" aria-label="Datum points"><svg><use href="#pointseye"/></svg></button>
          <button class="tool" aria-label="Coordinate systems"><svg><use href="#csyseye"/></svg></button>
          <button class="tool pressed" aria-label="Annotations"><svg><use href="#noteeye"/></svg></button>
        </div>
        <div class="group">
          <button class="tool" aria-label="Context help"><svg><use href="#help"/></svg></button>
        </div>
      </div>

      <div class="workspace">
        <aside class="navigator">
          <div class="tabs">
            <button class="active" aria-label="Model tree"><svg><use href="#tree"/></svg></button>
            <button aria-label="Folder browser"><svg><use href="#folders"/></svg></button>
            <button aria-label="Favorites"><svg><use href="#fav"/></svg></button>
            <button aria-label="Connections"><svg><use href="#conn"/></svg></button>
          </div>
          <div class="panel">
            <div class="panel-buttons">
              <button class="show">Show <svg><use href="#down"/></svg></button>
              <button class="settings">Settings <svg><use href="#down"/></svg></button>
            </div>
            <div class="tree-box">
              <div class="tree-head"></div>
              <ul class="tree">
                <li class="root"><svg><use href="#part"/></svg><span>PRT0001.PRT</span></li>
                <li><svg class="brown"><use href="#plane"/></svg><span>RIGHT</span></li>
                <li><svg class="brown"><use href="#plane"/></svg><span>TOP</span></li>
                <li><svg class="brown"><use href="#plane"/></svg><span>FRONT</span></li>
                <li><svg class="brown"><use href="#csys"/></svg><span>PRT_CSYS_DEF</span></li>
                <li class="selected"><button class="expand" aria-label="Expand"></button><svg><use href="#wall"/></svg><span>FIRST WALL</span></li>
                <li><svg><use href="#edge"/></svg><span>Edge Bend id 343</span></li>
                <li><svg><use href="#here"/></svg><span>Insert Here</span></li>
              </ul>
            </div>
          </div>
        </aside>
        <div class="splitter">
          <button class="left" aria-label="Collapse panel">‹</button>
          <button class="right" aria-label="Expand panel">›</button>
        </div>

        <svg class="viewport" viewBox="284 91 973 663">
          <rect x="284" y="91" width="973" height="663" fill="url(#sky)"/>
          <path class="datum" d="M598 91 612 358M622 540 634 754M284 507 621 535M1100 577 1257 590"/>
          <circle cx="612" cy="359" r="5" fill="none" stroke="#fff"/>

          <!-- upright wall -->
          <path d="M612 361 618 361 691 238 701 401 627 524 621 523z" fill="#685c56"/>
          <path d="M612 359 685 236H692L618 361z" fill="#a89086"/>
          <!-- bend strip -->
          <path d="M701 401 710 408 637 534 626 524z" fill="url(#bend)"/>
          <path d="M622 523Q625 536 640 537V532Q629 532 628 523z" fill="#5f5b55"/>
          <!-- floor -->
          <path d="M709 408 1173 448 1099 572 637 532z" fill="#9d8c81"/>
          <path d="M709 408 1173 448 1172 453 709 413z" fill="#ab8f86"/>
          <path d="M637 532 1099 572V577L640 537zM1172 452 1174 448V455L1100 577 1099 571z" fill="#79615c"/>

          <rect class="tag" x="618" y="349" width="60" height="14"/>
          <rect class="tag" x="627" y="423" width="15" height="13"/>
          <rect class="tag" x="659" y="502" width="20" height="14"/>
          <rect class="tag" x="790" y="515" width="23" height="13"/>
          <rect class="tag" x="855" y="542" width="9" height="12"/>

          <path class="edge" d="M612 361 685 236H692L701 401 627 524H621L612 361H618L627 524M618 361 691 239M686 237 695 400 701 401M695 400 622 521M699 400 631 516"/>
          <path class="edge" d="M709 407 1173 448V455L1100 577 640 537 635 533zM637 532 1099 572 1172 453 709 413 640 532M709 407V413M1172 453 1173 448M1099 572V577"/>

          <path class="dim" d="M631 363 634 418M630 406 694 411M636 408 615 441 606 457M592 479 562 530 621 536M576 440H616M635 437 640 537M620 480Q648 482 664 501M675 518Q681 528 682 540M621 505 659 508M679 509 786 518M817 521 1098 545M1098 540 1099 571"/>
          <path class="head" d="M631 363l3 8h-5zM634 418l-3-9h6zM616 440l-9-3v6zM562 530l2-9 5 3zM1098 545l-10-3v5zM682 540l-4-8h6zM620 480l9-1v5zM621 505l9-2v5zM640 537l-4-8h6z"/>
          <circle cx="622" cy="535" r="4" fill="#cfe0e0" stroke="#ffffc0"/><circle cx="622" cy="535" r="2" fill="#478"/>

          <g class="cad">
            <text x="613" y="360">Section 0</text>
            <text x="627" y="434">40</text>
            <text x="660" y="513">90°</text>
            <text x="791" y="525">100</text>
            <text x="592" y="473">55</text>
            <text x="514" y="444">1.2THICK</text>
            <text x="500" y="460">1090A02H01</text>
            <text x="384" y="473">1.2 THK ALUM TYPE 5052-H32</text>
            <text class="white" x="856" y="552">H</text>
          </g>
          <g class="tolerance">
            <text x="1179" y="711">X.X+-0.1</text>
            <text x="1173" y="723">X.XX+-0.01</text>
            <text x="1167" y="735">X.XXX+-0.001</text>
            <text x="1173" y="747">ANG.+-0.5</text>
          </g>
        </svg>

        <div class="side">
          <div class="stack">
            <button class="tool" aria-label="First wall"><svg><use href="#wall"/></svg></button>
            <button class="tool" aria-label="Conversion"><svg><use href="#conv"/></svg></button>
            <button class="tool" aria-label="Flat wall"><svg><use href="#flange"/></svg></button>
            <button class="tool" aria-label="Flange wall"><svg><use href="#flange2"/></svg></button>
            <button class="tool more" aria-label="Unattached wall"><svg><use href="#flat"/></svg><svg class="arrow"><use href="#right"/></svg></button>
            <button class="tool" aria-label="Extend wall"><svg><use href="#extend"/></svg></button>
            <button class="tool more" aria-label="Bend"><svg><use href="#unbend"/></svg><svg class="arrow"><use href="#right"/></svg></button>
            <button class="tool more" aria-label="Unbend"><svg><use href="#bendback"/></svg><svg class="arrow"><use href="#right"/></svg></button>
            <button class="tool more" aria-label="Rip"><svg><use href="#rip"/></svg><svg class="arrow"><use href="#right"/></svg></button>
            <button class="tool more" aria-label="Form"><svg><use href="#form"/></svg><svg class="arrow"><use href="#right"/></svg></button>
            <button class="tool" aria-label="Flat pattern"><svg><use href="#flatpat"/></svg></button>
          </div>
          <div class="stack brown">
            <button class="tool" aria-label="Sketch"><svg><use href="#sketch"/></svg></button>
            <button class="tool" aria-label="Plane"><svg><use href="#plane"/></svg></button>
            <button class="tool" aria-label="Axis"><svg><use href="#axis"/></svg></button>
            <button class="tool" aria-label="Curve"><svg><use href="#curve"/></svg></button>
            <button class="tool more" aria-label="Point"><svg><use href="#points"/></svg><svg class="arrow"><use href="#right"/></svg></button>
            <button class="tool" aria-label="Coordinate system"><svg><use href="#csys"/></svg></button>
            <button class="tool" aria-label="Analysis feature"><svg><use href="#measure"/></svg></button>
            <button class="tool" aria-label="Reference"><svg><use href="#chain"/></svg></button>
          </div>
          <div class="stack">
            <button class="tool" aria-label="Annotation"><svg><use href="#note"/></svg></button>
            <button class="tool off" aria-label="Propagate annotations"><svg><use href="#gnotes"/></svg></button>
          </div>
        </div>
      </div>

      <section class="messages">
        <ul>
          <li><svg><use href="#prompt"/></svg>Select a sketch. (If an internal sketch is preferred, the "Edit" option can be found in the Placement panel.)</li>
          <li><svg><use href="#info"/></svg>Showing feature 6 (EDGE BEND) in part PRT0001.</li>
          <li><svg><use href="#prompt"/></svg>Select items such as Dimensions, Sections, Trajectories, Tolerances, Surface Finish or other features for editing</li>
          <li><svg><use href="#prompt"/></svg>Select items such as Dimensions, Sections, Trajectories, Tolerances, Surface Finish or other features for editing</li>
        </ul>
        <div class="scrollbar">
          <button aria-label="Scroll up"><svg><use href="#up"/></svg></button>
          <div class="thumb"></div>
          <button aria-label="Scroll down"><svg><use href="#down"/></svg></button>
        </div>
      </section>

      <footer class="status">
        <label class="count" for="filter">1 selected</label>
        <div class="combo">
          <select id="filter"><option>All</option></select>
          <span><svg><use href="#down"/></svg></span>
        </div>
        <div class="lamp"><svg><use href="#light"/></svg></div>
      </footer>
    </main>

    <section class="window rear">
      <header class="rear-title">
        <div class="controls">
          <button aria-label="Minimize"><svg><use href="#min"/></svg></button>
          <button aria-label="Restore"><svg><use href="#restore"/></svg></button>
          <button class="close" aria-label="Close"><svg><use href="#close"/></svg></button>
        </div>
      </header>
      <div class="rear-menu"></div>
      <div class="rear-body">
        <svg class="rear-view" viewBox="1307 87 52 671">
          <rect x="1307" y="87" width="52" height="671" fill="url(#sky)"/>
          <path d="M1307 187 1359 255V347L1307 356z" fill="#917f76"/>
          <g class="tolerance">
            <text x="1308" y="715">-0.1</text>
            <text x="1308" y="727">-0.01</text>
            <text x="1308" y="739">-0.001</text>
            <text x="1308" y="751">-0.5</text>
          </g>
        </svg>
        <div class="side">
          <div class="stack grey">
            <button class="tool off" aria-label="Sketch"><svg><use href="#gsketch"/></svg></button>
            <button class="tool off" aria-label="Plane"><svg><use href="#plane"/></svg></button>
            <button class="tool off" aria-label="Axis"><svg><use href="#axis"/></svg></button>
            <button class="tool off" aria-label="Curve"><svg><use href="#curve"/></svg></button>
            <button class="tool off more" aria-label="Point"><svg><use href="#points"/></svg><svg class="arrow"><use href="#right"/></svg></button>
            <button class="tool off" aria-label="Coordinate system"><svg><use href="#csys"/></svg></button>
            <button class="tool off" aria-label="Analysis feature"><svg><use href="#gmeasure"/></svg></button>
          </div>
          <div class="stack">
            <button class="tool off" aria-label="Annotation"><svg><use href="#gnote"/></svg></button>
            <button class="tool off" aria-label="Propagate annotations"><svg><use href="#gnotes"/></svg></button>
          </div>
          <div class="stack">
            <button class="tool off" aria-label="Hole"><svg><use href="#g1"/></svg></button>
            <button class="tool off" aria-label="Shell"><svg><use href="#g2"/></svg></button>
            <button class="tool off" aria-label="Rib"><svg><use href="#g3"/></svg></button>
            <button class="tool off" aria-label="Draft"><svg><use href="#g4"/></svg></button>
            <button class="tool off" aria-label="Round"><svg><use href="#g5"/></svg></button>
            <button class="tool off" aria-label="Chamfer"><svg><use href="#g6"/></svg></button>
          </div>
          <div class="stack">
            <button class="tool off" aria-label="Extrude"><svg><use href="#g7"/></svg></button>
            <button class="tool off" aria-label="Revolve"><svg><use href="#g8"/></svg></button>
            <button class="tool off" aria-label="Sweep"><svg><use href="#g9"/></svg></button>
            <button class="tool off" aria-label="Boundary blend"><svg><use href="#g10"/></svg></button>
            <button class="tool off" aria-label="Style"><svg><use href="#g11"/></svg></button>
          </div>
        </div>
        <div class="side narrow">
          <div class="stack">
            <button class="tool off" aria-label="Mirror"><svg><use href="#mirror"/></svg></button>
            <button class="tool off" aria-label="Merge"><svg><use href="#merge"/></svg></button>
            <button class="tool off" aria-label="Trim"><svg><use href="#merge"/></svg></button>
            <button class="tool off" aria-label="Pattern"><svg><use href="#grid"/></svg></button>
          </div>
        </div>
      </div>
      <div class="rear-messages">
        <div class="scrollbar">
          <button aria-label="Scroll up"><svg><use href="#up"/></svg></button>
          <div class="thumb"></div>
          <button aria-label="Scroll down"><svg><use href="#down"/></svg></button>
        </div>
      </div>
      <footer class="status rear-status">
        <div class="combo">
          <select aria-label="Filter"></select>
          <span><svg><use href="#down"/></svg></span>
        </div>
        <div class="lamp"><svg><use href="#lighty"/></svg></div>
      </footer>
    </section>
  </div>

  <div class="taskbar">
    <button class="start"><svg><use href="#winlogo"/></svg>Start</button>
    <div class="quick">
      <button aria-label="Outlook"><svg><use href="#outlook"/></svg></button>
      <button aria-label="Show desktop"><svg><use href="#desktop"/></svg></button>
      <button aria-label="Zap"><svg><use href="#zap"/></svg></button>
      <button class="chevron">»</button>
    </div>
    <div class="tasks">
      <button><svg><use href="#outlook"/></svg>In...</button>
      <button><svg><use href="#msn"/></svg>M...</button>
      <button><svg><use href="#oapp"/></svg>O...</button>
      <button><svg><use href="#globe"/></svg>ft...</button>
      <button><svg><use href="#ie"/></svg>D...</button>
      <button><svg><use href="#dict"/></svg>金...</button>
      <button><svg><use href="#folder"/></svg>b...</button>
      <button><svg><use href="#folder"/></svg>fa...</button>
      <button><svg><use href="#ie"/></svg>搜...</button>
      <button><svg><use href="#asm"/></svg>1...</button>
      <button><svg><use href="#ie"/></svg>P...</button>
      <button><svg><use href="#pdf"/></svg>5...</button>
      <button><svg><use href="#part"/></svg>1...</button>
      <button><svg><use href="#asm"/></svg>1...</button>
      <button><svg><use href="#asm"/></svg>1...</button>
      <button class="current"><svg><use href="#part"/></svg>P...</button>
    </div>
    <div class="lang">
      <svg><use href="#cascade"/></svg>
      <svg class="small"><use href="#down"/></svg>
    </div>
    <div class="tray">
      <button class="chevron">«</button>
      <svg><use href="#net"/></svg>
      <svg><use href="#outlook"/></svg>
      <svg><use href="#signal"/></svg>
      <svg><use href="#user"/></svg>
      <svg><use href="#orange"/></svg>
      <time>19:29</time>
    </div>
  </div>
</div>

</body>
</html>
```

FILE: styles.css
```css
*,
*::before {
  box-sizing: border-box;
}

body {
  margin: 0;
  background: #fff;
  color: #000;
  font-family: "Liberation Sans", Arial, "Noto Sans CJK SC", sans-serif;
  font-size: 13px;
}

button {
  margin: 0;
  padding: 0;
  border: 0;
  background: none;
  color: inherit;
  font: inherit;
}

ul {
  margin: 0;
  padding: 0;
  list-style: none;
}

svg {
  display: block;
  flex: none;
}

.sprite {
  position: absolute;
  width: 0;
  height: 0;
}

.screen {
  margin-right: 96px;
  background: #c0c0c0;
}

.windows {
  display: flex;
}

.window {
  background: #c0c0c0;
}

.front {
  flex: 1;
  min-width: 0;
  padding: 3px 2px 1px 3px;
  border: 1px solid #000;
  border-top-color: #dfdfdf;
  border-left-color: #dfdfdf;
  box-shadow: inset 1px 1px #fff;
}

.rear {
  display: flex;
  flex-direction: column;
  width: 133px;
}

/* title bars */
.titlebar {
  display: flex;
  align-items: center;
  height: 22px;
  padding: 0 2px;
  background: linear-gradient(to right, #000080, #1084d0);
  color: #fff;
}

.title-icon {
  width: 16px;
  height: 16px;
}

.titlebar h1 {
  flex: 1;
  margin: 0 0 0 6px;
  font-size: 17px;
  line-height: 22px;
}

.controls {
  display: flex;
}

.controls button {
  width: 20px;
  height: 18px;
  padding: 1px;
  background: #c0c0c0;
  border: 1px solid;
  border-color: #fff #000 #000 #fff;
  box-shadow: inset -1px -1px #808080;
}

.controls .close {
  margin-left: 2px;
}

.controls svg {
  width: 16px;
  height: 14px;
}

/* menu and toolbars */
.menubar {
  display: flex;
  align-items: center;
  gap: 11px;
  height: 30px;
  margin-top: 1px;
  padding: 0 9px;
  border-top: 1px solid #fff;
  border-bottom: 1px solid #808080;
  border-right: 1px solid #808080;
  font-size: 14px;
}

.toolbar {
  display: flex;
  height: 34px;
}

.group {
  display: flex;
  align-items: center;
  padding-right: 4px;
  border-top: 1px solid #fff;
  border-right: 1px solid #808080;
  border-bottom: 1px solid #808080;
}

.group::before {
  content: "";
  width: 3px;
  height: 28px;
  margin: 0 3px;
  border: 1px solid;
  border-color: #fff #808080 #808080 #fff;
}

.tool {
  display: flex;
  align-items: center;
  justify-content: center;
  width: 28px;
  height: 28px;
}

.tool svg {
  width: 20px;
  height: 20px;
}

.off svg:not(.arrow) {
  filter: drop-shadow(1px 1px 0 #fff);
}

.raised {
  border: 1px solid;
  border-color: #fff #000 #000 #fff;
  box-shadow: inset -1px -1px #808080;
}

.pressed,
.tasks .current {
  border: 1px solid;
  border-color: #808080 #fff #fff #808080;
  background: repeating-conic-gradient(#fff 0 25%, #d0d0d0 0 50%) 0 0 / 2px 2px;
}

.drop svg {
  width: 6px;
  height: 6px;
  margin: 0 3px;
}

.side {
  width: 47px;
  flex: none;
}

.stack {
  padding: 2px 2px 3px;
  border: 1px solid;
  border-color: #fff #808080 #808080 #fff;
}

.stack::before {
  content: "";
  display: block;
  height: 3px;
  margin-bottom: 4px;
  border: 1px solid;
  border-color: #fff #808080 #808080 #fff;
}

.stack .tool {
  justify-content: flex-start;
  width: 100%;
  padding-left: 4px;
}

.stack .arrow {
  width: 8px;
  height: 8px;
  margin-left: 6px;
}

.brown {
  color: #8c5030;
}

.grey {
  color: #808080;
}

.arrow {
  color: #000;
}

/* model tree */
.workspace {
  display: flex;
}

.navigator {
  display: flex;
  flex-direction: column;
  flex: none;
  width: 268px;
}

.tabs {
  display: flex;
  gap: 2px;
}

.tabs button {
  display: flex;
  align-items: center;
  justify-content: center;
  width: 30px;
  height: 28px;
  margin-top: 2px;
  padding-right: 2px;
  border: 1px solid #fff;
  border-right: 2px solid #000;
  border-bottom: 0;
}

.tabs .active {
  width: 35px;
  padding-right: 0;
}

.tabs svg {
  width: 20px;
  height: 20px;
}

.panel {
  display: flex;
  flex-direction: column;
  flex: 1;
  padding: 0 2px 1px 1px;
  border: 1px solid;
  border-color: #fff #000 #000 #fff;
}

.panel-buttons {
  display: flex;
  margin-bottom: 2px;
}

.panel-buttons button {
  display: flex;
  align-items: center;
  gap: 3px;
  height: 19px;
  border: 1px solid;
  border-color: #fff #000 #000 #fff;
  box-shadow: inset -1px -1px #808080;
  font-family: "Liberation Mono", "Courier New", monospace;
  font-size: 10px;
}

.panel-buttons .show {
  width: 62px;
  padding-left: 18px;
}

.panel-buttons .settings {
  width: 86px;
  padding-left: 18px;
}

.panel-buttons svg {
  width: 8px;
  height: 8px;
}

.tree-box {
  flex: 1;
  border: 1px solid #000;
  background: #fff;
}

.tree-head {
  height: 18px;
  border: 1px solid;
  border-color: #fff #808080 #000 #fff;
  background: #c0c0c0;
}

.tree {
  padding: 1px 0 0 11px;
}

.tree li {
  display: flex;
  align-items: center;
  height: 18px;
  border-left: 1px dotted #808080;
}

.tree li::before {
  content: "";
  width: 11px;
  border-top: 1px dotted #808080;
}

.tree .root {
  margin-left: -9px;
  border-left: 0;
}

.tree .root::before {
  width: 0;
}

.tree li:last-child {
  height: 9px;
  margin-bottom: 9px;
  align-items: flex-end;
}

.tree li:last-child svg,
.tree li:last-child span {
  margin-bottom: -8px;
}

.tree svg {
  width: 16px;
  height: 16px;
  margin-right: 2px;
}

.tree span {
  padding: 0 1px;
  line-height: 17px;
}

.tree .selected {
  position: relative;
}

.tree .selected span {
  background: #000080;
  color: #fff;
}

.expand {
  position: absolute;
  left: -5px;
  top: 4px;
  width: 9px;
  height: 9px;
  border: 1px solid #000;
  background:
    linear-gradient(#000, #000) center / 5px 1px no-repeat,
    linear-gradient(#000, #000) center / 1px 5px no-repeat,
    #fff;
}

.splitter {
  display: flex;
  justify-content: space-between;
  align-items: center;
  flex: none;
  width: 12px;
  background: linear-gradient(to right, #c0c0c0 5px, #808080 5px 6px, #c0c0c0 6px 10px, #808080 10px 12px);
}

.splitter button {
  width: 6px;
  height: 50px;
  background: #e4e0d8;
  font-size: 14px;
  font-weight: bold;
  line-height: 50px;
}

.splitter .left {
  margin-bottom: 50px;
}

.splitter .right {
  margin-top: 50px;
}

/* graphics area */
.viewport {
  flex: 1;
  min-width: 0;
  height: auto;
}

.datum {
  fill: none;
  stroke: #f09018;
  stroke-dasharray: 6 6;
  shape-rendering: crispEdges;
}

.edge {
  fill: none;
  stroke: #cc1440;
  shape-rendering: crispEdges;
}

.tag {
  fill: #c0baa8;
}

.dim {
  fill: none;
  stroke: #ffff20;
  shape-rendering: crispEdges;
}

.head {
  fill: #ffff20;
}

.cad text {
  fill: #ffff20;
  font-family: "Liberation Mono", "Courier New", monospace;
  font-size: 12px;
}

.cad .white {
  fill: #fff;
}

.tolerance text {
  fill: #77756c;
  font-family: "Liberation Mono", "Courier New", monospace;
  font-size: 10px;
}

/* message log */
.messages {
  display: flex;
  margin-top: 2px;
  border-left: 1px solid #808080;
  border-bottom: 1px solid #808080;
}

.messages ul {
  flex: 1;
  padding: 11px 0 5px 6px;
}

.messages li {
  display: flex;
  align-items: center;
  height: 16px;
  white-space: nowrap;
}

.messages li svg {
  width: 12px;
  height: 12px;
  margin-right: 2px;
}

.scrollbar {
  display: flex;
  flex-direction: column;
  width: 18px;
  margin-top: 1px;
  background: repeating-conic-gradient(#fff 0 25%, #c8c8c8 0 50%) 0 0 / 2px 2px;
}

.scrollbar button,
.thumb {
  display: flex;
  align-items: center;
  justify-content: center;
  height: 18px;
  background: #c0c0c0;
  border: 1px solid;
  border-color: #fff #000 #000 #fff;
  box-shadow: inset -1px -1px #808080;
}

.scrollbar .thumb {
  height: 8px;
  margin-top: auto;
}

.scrollbar svg,
.combo svg {
  width: 8px;
  height: 8px;
}

/* status bar */
.status {
  display: flex;
  align-items: center;
  justify-content: flex-end;
  height: 27px;
  border-top: 1px solid #fff;
  font-family: "Liberation Mono", "Courier New", monospace;
  font-size: 10px;
}

.count {
  width: 97px;
  height: 24px;
  padding-left: 5px;
  border-left: 1px solid #fff;
  line-height: 18px;
}

.combo {
  display: flex;
  width: 181px;
  height: 20px;
  border: 1px solid;
  border-color: #000 #fff #fff #000;
  background: #fff;
}

.combo select {
  flex: 1;
  min-width: 0;
  padding: 0 0 0 5px;
  border: 0;
  appearance: none;
  background: #fff;
  color: #000;
  font: inherit;
}

.combo span {
  display: flex;
  align-items: center;
  justify-content: center;
  width: 18px;
  background: #c0c0c0;
  border: 1px solid;
  border-color: #fff #000 #000 #fff;
  box-shadow: inset -1px -1px #808080;
}

.lamp {
  width: 58px;
  height: 24px;
  margin-left: 3px;
  padding: 2px 7px;
  border-left: 1px solid #fff;
}

.lamp svg {
  width: 12px;
  height: 20px;
}

/* second window, behind */
.rear-title {
  display: flex;
  justify-content: flex-end;
  height: 23px;
  padding: 2px 2px 0 0;
}

.rear-menu {
  height: 30px;
  border-top: 1px solid #fff;
  border-right: 1px solid #808080;
  border-bottom: 1px solid #808080;
}

.rear-body {
  display: flex;
  align-items: flex-start;
  margin-top: 34px;
}

.rear-view {
  width: 52px;
}

.rear .side {
  width: 47px;
}

.rear .narrow {
  width: 34px;
}

.rear-messages {
  display: flex;
  flex: 1;
  justify-content: flex-end;
  padding: 3px 0 1px;
  border-bottom: 1px solid #808080;
}

.rear-status .combo {
  flex: 1;
  border-left: 0;
}

/* taskbar */
.taskbar {
  display: flex;
  align-items: center;
  height: 34px;
  padding: 1px 2px 2px;
  border-top: 1px solid #c0c0c0;
  box-shadow: inset 0 1px #fff;
  font-size: 16px;
}

.start,
.tasks button {
  display: flex;
  align-items: center;
  height: 27px;
  border: 1px solid;
  border-color: #fff #000 #000 #fff;
  box-shadow: inset -1px -1px #808080;
  white-space: nowrap;
}

.start {
  width: 58px;
  padding-left: 1px;
  gap: 2px;
}

.quick {
  display: flex;
  gap: 7px;
  width: 108px;
  padding-left: 8px;
}

.taskbar svg {
  width: 20px;
  height: 20px;
}

.taskbar .start svg {
  width: 16px;
  height: 16px;
}

.chevron {
  width: 14px;
  height: 20px;
  font-weight: bold;
  line-height: 16px;
}

.quick .chevron {
  line-height: 10px;
}

.tasks {
  display: flex;
  flex: 1;
  gap: 3px;
}

.tasks button {
  width: 58px;
  padding-left: 2px;
  gap: 4px;
}

.tasks .current {
  border-color: #000 #fff #fff #000;
  box-shadow: none;
}

.lang {
  display: flex;
  flex-direction: column;
  gap: 4px;
  width: 93px;
  height: 28px;
  padding: 3px 5px;
  border-left: 1px solid #808080;
}

.taskbar .lang svg {
  width: 10px;
  height: 10px;
}

.taskbar .lang .small {
  width: 6px;
  height: 6px;
}

.tray {
  display: flex;
  align-items: center;
  gap: 2px;
  width: 190px;
  height: 28px;
  padding-left: 3px;
  border: 1px solid;
  border-color: #808080 #fff #fff #808080;
}

.tray time {
  margin-left: 8px;
}
```
